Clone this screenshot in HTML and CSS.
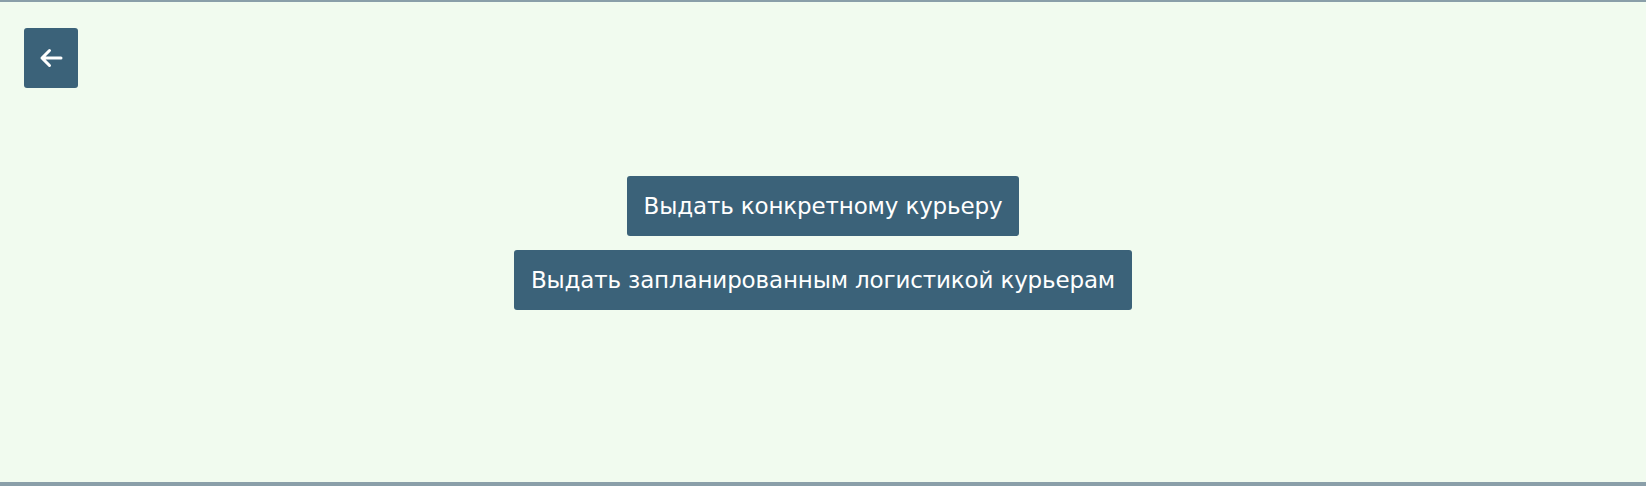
FILE: index.html
```html
<!DOCTYPE html>
<html lang="ru">
<head>
<meta charset="utf-8">
<title>Выдача</title>
<link rel="stylesheet" href="styles.css">
</head>
<body>
<div class="page">
  <div class="stage">
    <button class="back" type="button" aria-label="Назад">
      <svg class="back-icon" viewBox="0 0 24 20" width="24" height="20">
        <path d="M3 10 H22 M10.5 2.5 L3 10 L10.5 17.5" fill="none" stroke="#ffffff" stroke-width="3" stroke-linecap="round" stroke-linejoin="round"/>
      </svg>
    </button>
    <div class="actions">
      <button class="action" type="button">Выдать конкретному курьеру</button>
      <button class="action" type="button">Выдать запланированным логистикой курьерам</button>
    </div>
  </div>
</div>
</body>
</html>
```

FILE: styles.css
```css
html, body {
  margin: 0;
  padding: 0;
}
body {
  background: #8a9fa9;
  font-family: "DejaVu Sans", "Liberation Sans", sans-serif;
}
.page {
  box-sizing: border-box;
  height: 486px;
  background: #f1fbef;
  border-top: 2px solid #8a9fa9;
  border-bottom: 4px solid #8a9fa9;
  padding: 26px 24px 24px;
  display: grid;
}
.stage {
  display: grid;
}
.back, .actions {
  grid-area: 1 / 1;
}
.back {
  justify-self: start;
  align-self: start;
  width: 54px;
  height: 60px;
  border: none;
  border-radius: 3px;
  background: #3b6279;
  padding: 0;
  display: flex;
  align-items: center;
  justify-content: center;
  cursor: pointer;
}
.back-icon {
  display: block;
}
.actions {
  align-self: center;
  justify-self: center;
  display: flex;
  flex-direction: column;
  align-items: center;
  gap: 14px;
}
.action {
  height: 60px;
  padding: 0 16.5px;
  border: none;
  border-radius: 3px;
  background: #3b6279;
  color: #ffffff;
  font-family: "DejaVu Sans", "Liberation Sans", sans-serif;
  font-size: 23px;
  letter-spacing: -0.15px;
  line-height: 28px;
  cursor: pointer;
}
```
